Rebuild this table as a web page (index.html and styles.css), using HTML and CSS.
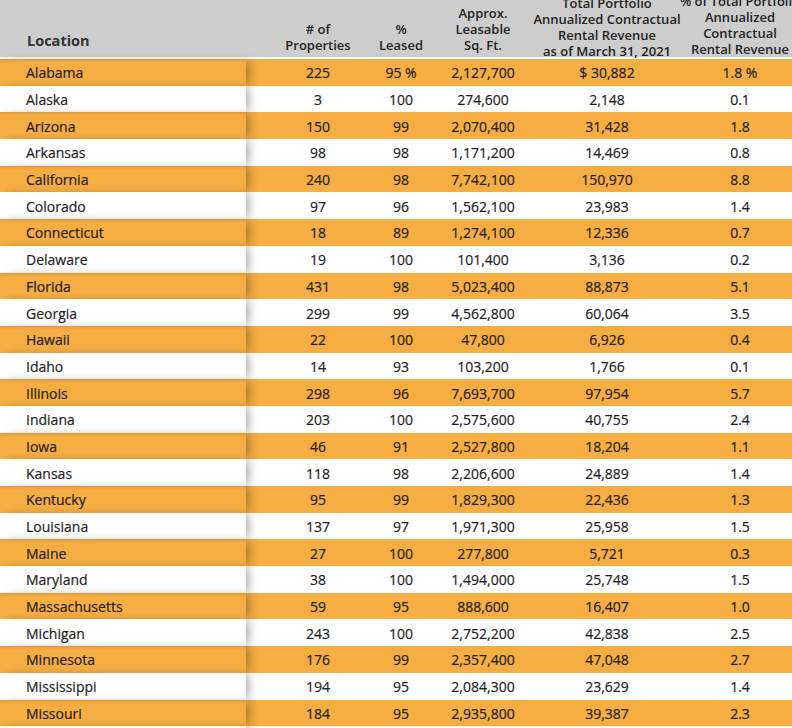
FILE: index.html
```html
<!DOCTYPE html>
<html>
<head>
<meta charset="utf-8">
<link rel="stylesheet" href="styles.css">
</head>
<body>
<div class="table">
  <div class="head">
    <div class="h h-loc"><span>Location</span></div>
    <div class="h h-c2"><span># of<br>Properties</span></div>
    <div class="h h-c3"><span>%<br>Leased</span></div>
    <div class="h h-c4"><span>Approx.<br>Leasable<br>Sq. Ft.</span></div>
    <div class="h h-c5"><span>Total Portfolio<br>Annualized Contractual<br>Rental Revenue<br>as of March 31, 2021</span></div>
    <div class="h h-c6"><span>% of Total Portfolio<br>Annualized<br>Contractual<br>Rental Revenue</span></div>
  </div>
  <div class="body">
    <div class="row first"><div class="c loc">Alabama</div><div class="c c2">225</div><div class="c">95 %</div><div class="c">2,127,700</div><div class="c">$ 30,882</div><div class="c c6">1.8 %</div></div>
    <div class="row"><div class="c loc">Alaska</div><div class="c c2">3</div><div class="c">100</div><div class="c">274,600</div><div class="c">2,148</div><div class="c c6">0.1</div></div>
    <div class="row"><div class="c loc">Arizona</div><div class="c c2">150</div><div class="c">99</div><div class="c">2,070,400</div><div class="c">31,428</div><div class="c c6">1.8</div></div>
    <div class="row"><div class="c loc">Arkansas</div><div class="c c2">98</div><div class="c">98</div><div class="c">1,171,200</div><div class="c">14,469</div><div class="c c6">0.8</div></div>
    <div class="row"><div class="c loc">California</div><div class="c c2">240</div><div class="c">98</div><div class="c">7,742,100</div><div class="c">150,970</div><div class="c c6">8.8</div></div>
    <div class="row"><div class="c loc">Colorado</div><div class="c c2">97</div><div class="c">96</div><div class="c">1,562,100</div><div class="c">23,983</div><div class="c c6">1.4</div></div>
    <div class="row"><div class="c loc">Connecticut</div><div class="c c2">18</div><div class="c">89</div><div class="c">1,274,100</div><div class="c">12,336</div><div class="c c6">0.7</div></div>
    <div class="row"><div class="c loc">Delaware</div><div class="c c2">19</div><div class="c">100</div><div class="c">101,400</div><div class="c">3,136</div><div class="c c6">0.2</div></div>
    <div class="row"><div class="c loc">Florida</div><div class="c c2">431</div><div class="c">98</div><div class="c">5,023,400</div><div class="c">88,873</div><div class="c c6">5.1</div></div>
    <div class="row"><div class="c loc">Georgia</div><div class="c c2">299</div><div class="c">99</div><div class="c">4,562,800</div><div class="c">60,064</div><div class="c c6">3.5</div></div>
    <div class="row"><div class="c loc">Hawaii</div><div class="c c2">22</div><div class="c">100</div><div class="c">47,800</div><div class="c">6,926</div><div class="c c6">0.4</div></div>
    <div class="row"><div class="c loc">Idaho</div><div class="c c2">14</div><div class="c">93</div><div class="c">103,200</div><div class="c">1,766</div><div class="c c6">0.1</div></div>
    <div class="row"><div class="c loc">Illinois</div><div class="c c2">298</div><div class="c">96</div><div class="c">7,693,700</div><div class="c">97,954</div><div class="c c6">5.7</div></div>
    <div class="row"><div class="c loc">Indiana</div><div class="c c2">203</div><div class="c">100</div><div class="c">2,575,600</div><div class="c">40,755</div><div class="c c6">2.4</div></div>
    <div class="row"><div class="c loc">Iowa</div><div class="c c2">46</div><div class="c">91</div><div class="c">2,527,800</div><div class="c">18,204</div><div class="c c6">1.1</div></div>
    <div class="row"><div class="c loc">Kansas</div><div class="c c2">118</div><div class="c">98</div><div class="c">2,206,600</div><div class="c">24,889</div><div class="c c6">1.4</div></div>
    <div class="row"><div class="c loc">Kentucky</div><div class="c c2">95</div><div class="c">99</div><div class="c">1,829,300</div><div class="c">22,436</div><div class="c c6">1.3</div></div>
    <div class="row"><div class="c loc">Louisiana</div><div class="c c2">137</div><div class="c">97</div><div class="c">1,971,300</div><div class="c">25,958</div><div class="c c6">1.5</div></div>
    <div class="row"><div class="c loc">Maine</div><div class="c c2">27</div><div class="c">100</div><div class="c">277,800</div><div class="c">5,721</div><div class="c c6">0.3</div></div>
    <div class="row"><div class="c loc">Maryland</div><div class="c c2">38</div><div class="c">100</div><div class="c">1,494,000</div><div class="c">25,748</div><div class="c c6">1.5</div></div>
    <div class="row"><div class="c loc">Massachusetts</div><div class="c c2">59</div><div class="c">95</div><div class="c">888,600</div><div class="c">16,407</div><div class="c c6">1.0</div></div>
    <div class="row"><div class="c loc">Michigan</div><div class="c c2">243</div><div class="c">100</div><div class="c">2,752,200</div><div class="c">42,838</div><div class="c c6">2.5</div></div>
    <div class="row"><div class="c loc">Minnesota</div><div class="c c2">176</div><div class="c">99</div><div class="c">2,357,400</div><div class="c">47,048</div><div class="c c6">2.7</div></div>
    <div class="row"><div class="c loc">Mississippi</div><div class="c c2">194</div><div class="c">95</div><div class="c">2,084,300</div><div class="c">23,629</div><div class="c c6">1.4</div></div>
    <div class="row"><div class="c loc">Missouri</div><div class="c c2">184</div><div class="c">95</div><div class="c">2,935,800</div><div class="c">39,387</div><div class="c c6">2.3</div></div>
    <div class="row"><div class="c loc">&nbsp;</div><div class="c c2">&nbsp;</div><div class="c">&nbsp;</div><div class="c">&nbsp;</div><div class="c">&nbsp;</div><div class="c c6">&nbsp;</div></div>
  </div>
</div>
</body>
</html>
```

FILE: styles.css
```css
html, body {
  margin: 0;
  padding: 0;
  overflow: hidden;
  background: #ffffff;
}
body {
  font-family: "Open Sans", "Liberation Sans", sans-serif;
  color: #1e1e1e;
  width: 792px;
  height: 728px;
}
.table {
  width: 810px;
}
.head,
.row {
  display: grid;
  grid-template-columns: 246px 114px 82px 82px 166px 120px;
}
.head {
  grid-template-rows: 57px;
  height: 57px;
  background: #cdcdcd;
  border-bottom: 2px solid #ffffff;
}
.h {
  height: 57px;
  min-height: 0;
  box-sizing: border-box;
  display: flex;
  flex-direction: column;
  justify-content: flex-end;
  align-items: center;
  text-align: center;
  font-size: 13px;
  font-weight: 600;
  line-height: 16px;
  color: #232323;
  white-space: nowrap;
  padding-bottom: 4px;
}
.h span {
  flex-shrink: 0;
}
.h-loc {
  align-items: flex-start;
  padding-left: 27px;
  padding-bottom: 8px;
  font-size: 14.5px;
  font-weight: 700;
  color: #333333;
}
.h-c2 {
  padding-left: 30px;
}
.h-c5 {
  padding-bottom: 0;
}
.h-c5 span {
  margin-bottom: -2px;
}
.h-c6 {
  padding-bottom: 0;
  padding-right: 20px;
}
.row {
  height: 26.7px;
  background: #ffffff;
  font-size: 14px;
}
.row:nth-child(odd) {
  background: #f6ad42;
}
.c {
  display: flex;
  align-items: center;
  justify-content: center;
  white-space: nowrap;
  padding-top: 1px;
  -webkit-text-stroke: 0.2px currentColor;
}
.loc {
  justify-content: flex-start;
  padding-left: 26px;
  position: relative;
  z-index: 1;
  background: inherit;
  box-shadow: 6px 0 8px -2px rgba(0, 0, 0, 0.28);
}
.row:nth-child(odd) .loc {
  box-shadow: 6px 0 8px -2px rgba(0, 0, 0, 0.28), inset 0 3px 3px -2px rgba(120, 70, 0, 0.25);
}
.c2 {
  padding-left: 30px;
}
.c6 {
  padding-right: 20px;
}
```
